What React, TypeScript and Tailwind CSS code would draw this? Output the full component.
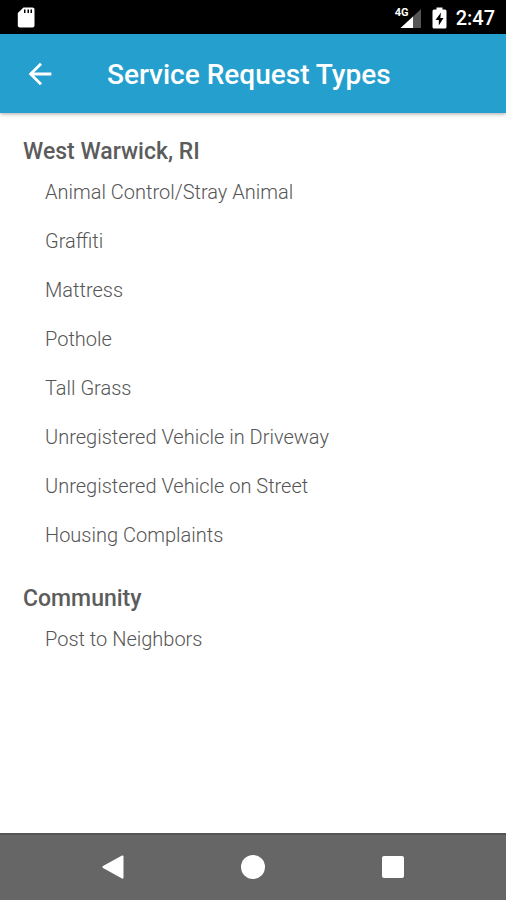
const sections = [
  {
    title: "West Warwick, RI",
    items: [
      "Animal Control/Stray Animal",
      "Graffiti",
      "Mattress",
      "Pothole",
      "Tall Grass",
      "Unregistered Vehicle in Driveway",
      "Unregistered Vehicle on Street",
      "Housing Complaints",
    ],
  },
  {
    title: "Community",
    items: ["Post to Neighbors"],
  },
];

const StatusBar = () => (
  <div className="flex h-[34px] shrink-0 items-center justify-between bg-black pl-[17px] pr-[11px] pt-px text-white">
    <svg className="h-[21px] w-[18px]" viewBox="0 0 18 21" aria-hidden="true">
      <path
        d="M6.5 0.5H15.5Q17.500 0.500 17.500 2V18.500Q17.500 20.500 15.500 20.500H3Q0.800 20.500 0.800 18.500V6Z"
        fill="#fff"
      />
      <path d="M7 2.500H8.500V6H7ZM10.500 2.500H12V6H10.500ZM13.500 2.500H15V6H13.500Z" fill="#000" />
    </svg>

    <div className="flex items-center">
      <div className="relative h-[22px] w-[26px]">
        <span className="absolute left-0 top-0 font-bold text-[11px] leading-3">4G</span>
        <svg className="h-full w-full" viewBox="0 0 26 22" aria-hidden="true">
          <path d="M26 2V21H18V9.500Z" fill="#555" />
          <path d="M18 9.500V21H5.500Z" fill="#fff" />
        </svg>
      </div>
      <svg className="ml-[11px] h-[22px] w-[15px]" viewBox="0 0 15 22" aria-hidden="true">
        <path
          d="M4.500 0.500H10.500V2.500H13Q14.500 2.500 14.500 4V20Q14.500 21.500 13 21.500H2Q0.500 21.500 0.500 20V4Q0.500 2.500 2 2.500H4.500Z"
          fill="#fff"
        />
        <path d="M9 5.500L3.500 13H6.800V18.500L11.500 11H8.300Z" fill="#000" />
      </svg>
      <span className="ml-[9px] text-[20px] font-medium leading-6">2:47</span>
    </div>
  </div>
);

const Header = () => (
  <header className="z-10 flex h-[79px] shrink-0 items-center bg-[#259fce] pl-6 text-white shadow-[0_1px_4px_rgba(0,0,0,0.35)]">
    <button type="button" aria-label="Back" className="flex h-8 w-8 items-center justify-center">
      <svg className="h-[34px] w-[34px] shrink-0" viewBox="0 0 24 24" fill="currentColor" aria-hidden="true">
        <path d="M20 11H7.830l5.590-5.590L12 4l-8 8 8 8 1.410-1.410L7.830 13H20v-2z" />
      </svg>
    </button>
    <h1 className="ml-[51px] pt-0.5 text-[28px] font-medium leading-8">Service Request Types</h1>
  </header>
);

const NavBar = () => (
  <nav className="flex h-[67px] shrink-0 items-center justify-center gap-[108px] border-t-2 border-[#555] bg-[#666] pb-0.5">
    <button type="button" aria-label="Back" className="flex h-8 w-8 items-center justify-center">
      <svg className="h-6 w-6" viewBox="0 0 24 24" fill="#fff" aria-hidden="true">
        <path d="M21 0.500Q22.500 0 22.500 1.500V22.500Q22.500 24 21 23.500L2 13Q0.500 12 2 11Z" />
      </svg>
    </button>
    <button type="button" aria-label="Home" className="flex h-8 w-8 items-center justify-center">
      <span className="h-6 w-6 rounded-full bg-white"></span>
    </button>
    <button type="button" aria-label="Recent apps" className="flex h-8 w-8 items-center justify-center">
      <span className="h-[22px] w-[22px] rounded-[2px] bg-white"></span>
    </button>
  </nav>
);

const App = () => {
  return (
    <div className="flex min-h-screen flex-col bg-white font-[Roboto,sans-serif]">
      <StatusBar />
      <Header />

      <main className="flex grow flex-col gap-[25px] px-[23px] pt-6">
        {sections.map((section) => (
          <section key={section.title}>
            <h2 className="text-[23px] font-medium leading-[30px] text-[#5c5c5c]">{section.title}</h2>
            <ul>
              {section.items.map((item) => (
                <li key={item}>
                  <button
                    type="button"
                    className="flex h-[49px] w-full items-center pl-[22px] text-left text-[20px] font-light text-[#555]"
                  >
                    {item}
                  </button>
                </li>
              ))}
            </ul>
          </section>
        ))}
      </main>

      <NavBar />
    </div>
  );
};

export default App;
